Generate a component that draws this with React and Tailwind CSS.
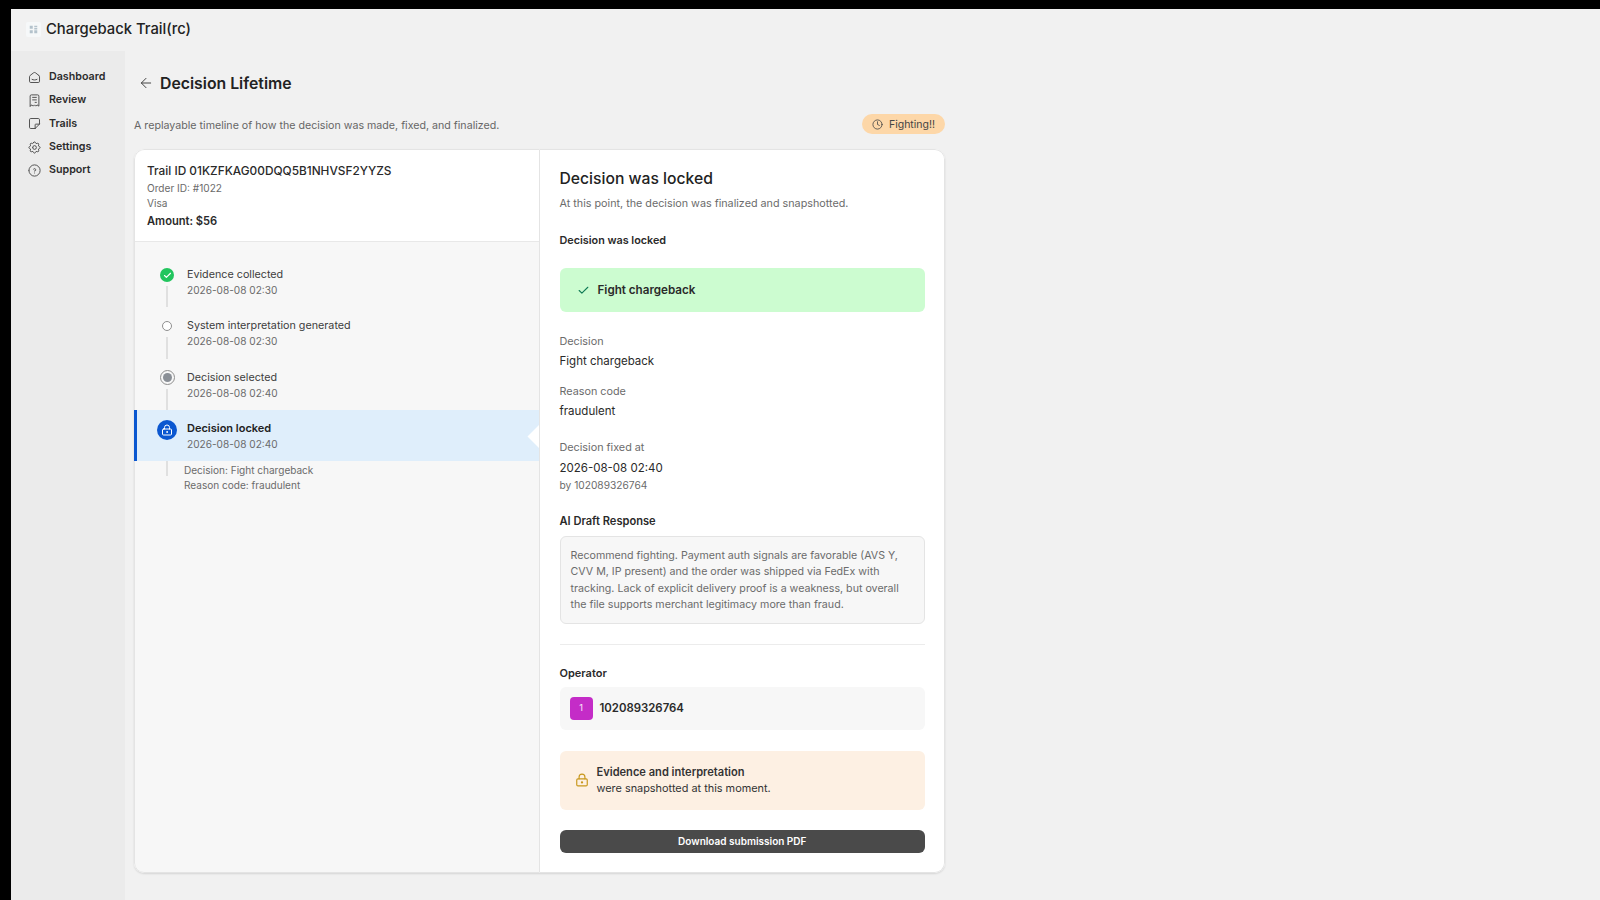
import { ArrowLeft, Check, Clock, LockKeyhole } from 'lucide-react'
import { TbHelpCircle, TbNote, TbReceipt, TbSettings, TbSmartHome } from 'react-icons/tb'

const navItems = [
  { label: 'Dashboard', icon: TbSmartHome },
  { label: 'Review', icon: TbReceipt },
  { label: 'Trails', icon: TbNote },
  { label: 'Settings', icon: TbSettings },
  { label: 'Support', icon: TbHelpCircle },
]

const Line = () => <div className="w-[2px] flex-1 bg-[#e0e0e0] mt-[2px] -mb-[8px]" />

const TimelineRow = ({ title, time, icon, active, last }) => (
  <div className={`relative -ml-px flex h-[51.33px] overflow-hidden ${active ? 'bg-[#dfeefb]' : ''}`}>
    {active && <div className="w-[3px] bg-[#0b57d0]" />}
    <div className={`flex flex-col items-center ${active ? 'w-[20px] ml-[20px]' : 'w-[20px] ml-[23px]'}`}>
      <div className={`flex items-center justify-center shrink-0 ${active ? 'h-[20px] mt-[10px]' : 'h-[18px] mt-[10px]'}`}>{icon}</div>
      {!last && <Line />}
    </div>
    <div className="ml-[10px] pt-[11px]">
      <div className={`text-[10.75px] leading-[15px] ${active ? 'text-[11px] font-semibold text-[#222222]' : 'text-[#3d3d3d]'}`}>{title}</div>
      <div className="text-[10.1px] leading-4 text-[#6b6b6b]">{time}</div>
    </div>
    {active && <div className="absolute right-[-8.5px] top-[18px] w-[17px] h-[17px] rotate-45 bg-white" />}
  </div>
)

const Field = ({ label, value, className, valueClass = 'mt-[3px]' }) => (
  <div className={className}>
    <div className="text-[10.8px] leading-4 text-[#6b6b6b]">{label}</div>
    <div className={`${valueClass} text-[11.5px] leading-4 text-[#2a2a2a]`}>{value}</div>
  </div>
)

export default function App() {
  return (
    <div className="flex h-screen w-full flex-col bg-black pt-[9px] pl-[11px] font-['Inter',sans-serif]">
      <header className="flex h-[42px] shrink-0 items-center bg-[#f1f1f1] pl-[15px] pb-[2px]">
        <div className="flex h-[15px] w-[15px] items-center justify-center rounded-[2px] bg-[#f6f8f9]">
          <svg viewBox="0 0 12 12" className="h-[9px] w-[9px]" fill="#b4c2cc">
            <rect x="1" y="1" width="4" height="4" />
            <rect x="7" y="1" width="4" height="2" />
            <rect x="7" y="4" width="4" height="2" />
            <rect x="1" y="7" width="4" height="4" />
            <rect x="7" y="7" width="4" height="4" />
          </svg>
        </div>
        <h1 className="ml-[5px] text-[14.8px] font-medium text-[#222222]">Chargeback Trail(rc)</h1>
      </header>

      <div className="flex min-h-0 flex-1">
        <aside className="w-[114px] shrink-0 bg-[#ebebeb] pl-[15.5px] pt-[14.5px]">
          {navItems.map(({ label, icon: Icon }) => (
            <div key={label} className="flex h-[23.3px] items-center gap-[7.5px] text-[10.7px] font-semibold text-[#2c2c2c]">
              <Icon className="h-[15px] w-[15px] text-[#4b4b4b]" strokeWidth={1.5} />
              {label}
            </div>
          ))}
        </aside>

        <main className="min-w-0 flex-1 bg-[#f1f1f1] pl-[9px]">
          <div className="mt-[16px] flex h-[32px] items-center pl-[3.5px]">
            <ArrowLeft className="h-[16px] w-[16px] text-[#444444]" strokeWidth={1.5} />
            <h2 className="ml-[6.5px] pt-[1px] text-[15.8px] font-semibold text-[#222222]">Decision Lifetime</h2>
          </div>

          <div className="mt-[15px] flex h-[20px] w-[811px] items-center justify-between">
            <p className="pt-[3px] text-[10.67px] text-[#666666]">A replayable timeline of how the decision was made, fixed, and finalized.</p>
            <span className="flex h-[20px] w-[83px] items-center justify-center gap-[6px] rounded-full bg-[#fdd7a8] pt-[1px] text-[10.5px] text-[#444444]">
              <Clock className="h-[11px] w-[11px]" strokeWidth={1.75} />
              Fighting!!
            </span>
          </div>

          <section className="mt-[15px] flex h-[724px] w-[811px] overflow-hidden rounded-[10px] bg-white shadow-[0_1px_2px_rgba(0,0,0,0.12)]">
            <div className="flex w-[406px] shrink-0 flex-col rounded-l-[10px] border border-[#e4e4e4] bg-[#f7f7f7]">
              <div className="h-[92px] shrink-0 rounded-tl-[10px] border-b border-[#e8e8e8] bg-white pl-[12px] pt-[12px]">
                <div className="text-[11.85px] leading-[18px] font-medium text-[#2a2a2a]">Trail ID 01KZFKAG00DQQ5B1NHVSF2YYZS</div>
                <div className="mt-[1px] text-[10.1px] leading-[15px] text-[#6b6b6b]">Order ID: #1022</div>
                <div className="text-[10.1px] leading-[15px] text-[#6b6b6b]">Visa</div>
                <div className="mt-[2px] text-[11.15px] leading-[17px] font-semibold text-[#2a2a2a]">Amount: $56</div>
              </div>

              <div className="pt-[14px]">
                <TimelineRow
                  title="Evidence collected"
                  time="2026-08-08 02:30"
                  icon={
                    <span className="flex h-[14px] w-[14px] items-center justify-center rounded-full bg-[#22c55e]">
                      <Check className="h-[9px] w-[9px] text-white" strokeWidth={3} />
                    </span>
                  }
                />
                <TimelineRow
                  title="System interpretation generated"
                  time="2026-08-08 02:30"
                  icon={<span className="h-[10px] w-[10px] rounded-full border-[1.5px] border-[#8f8f8f] bg-white" />}
                />
                <TimelineRow
                  title="Decision selected"
                  time="2026-08-08 02:40"
                  icon={
                    <span className="flex h-[15px] w-[15px] items-center justify-center rounded-full border-[1.5px] border-[#8f8f8f]">
                      <span className="h-[9px] w-[9px] rounded-full bg-[#8a8f96]" />
                    </span>
                  }
                />
                <TimelineRow
                  active
                  last
                  title="Decision locked"
                  time="2026-08-08 02:40"
                  icon={
                    <span className="flex h-[20px] w-[20px] items-center justify-center rounded-full bg-[#0b57d0]">
                      <LockKeyhole className="h-[12px] w-[12px] text-white" strokeWidth={2} />
                    </span>
                  }
                />
                <div className="flex">
                  <div className="ml-[31px] h-[15px] w-[2px] bg-[#e0e0e0]" />
                  <div className="ml-[16px] pt-[2px] text-[10.05px] leading-[15px] text-[#6b6b6b]">
                    <div>Decision: Fight chargeback</div>
                    <div>Reason code: fraudulent</div>
                  </div>
                </div>
              </div>
            </div>

            <div className="flex min-w-0 flex-1 flex-col rounded-r-[10px] border-y border-r border-[#e4e4e4] pl-[19.5px] pr-[19px] pt-[17px]">
              <h3 className="text-[15.7px] leading-6 font-medium text-[#222222]">Decision was locked</h3>
              <p className="mt-[5px] text-[10.77px] leading-4 text-[#6b6b6b]">At this point, the decision was finalized and snapshotted.</p>
              <div className="mt-[21px] text-[10.8px] leading-4 font-semibold text-[#2a2a2a]">Decision was locked</div>

              <div className="mt-[19px] flex h-[44px] items-center rounded-[6px] bg-[#ccfcd0] pl-[17px]">
                <Check className="h-[13px] w-[13px] text-[#0f7a55]" strokeWidth={2} />
                <span className="ml-[8px] pt-[2px] text-[11.65px] font-semibold text-[#2a2a2a]">Fight chargeback</span>
              </div>

              <Field label="Decision" value="Fight chargeback" className="mt-[22px]" />
              <Field label="Reason code" value="fraudulent" className="mt-[15px]" />

              <Field label="Decision fixed at" value="2026-08-08 02:40" className="mt-[21px]" valueClass="mt-1" />
              <div className="mt-[1px] text-[10.2px] leading-4 text-[#6b6b6b]">by 102089326764</div>

              <div className="mt-[19.5px] text-[11.1px] leading-4 font-semibold text-[#2a2a2a]">AI Draft Response</div>
              <div className="mt-[7px] h-[88px] rounded-[6px] border border-[#e4e4e4] bg-[#f7f7f7] pl-[10px] pr-[8px] pt-[11px] text-[10.67px] leading-[16.5px] text-[#6b6b6b]">
                Recommend fighting. Payment auth signals are favorable (AVS Y, CVV M, IP present) and the order was shipped via FedEx with tracking. Lack of explicit delivery proof is a weakness, but overall the file supports merchant legitimacy more than fraud.
              </div>

              <div className="mt-[20px] h-px bg-[#ececec]" />

              <div className="mt-[20px] text-[11px] leading-4 font-semibold text-[#2a2a2a]">Operator</div>
              <div className="mt-[6px] flex h-[43px] items-center rounded-[6px] bg-[#f7f7f7] pl-[10px]">
                <span className="flex h-[23px] w-[23px] items-center justify-center rounded-[4px] bg-[#c42cc7] text-[9px] font-medium text-[#f3d5f4]">1</span>
                <span className="ml-[7px] pt-[2px] text-[11.4px] font-semibold text-[#2a2a2a]">102089326764</span>
              </div>

              <div className="mt-[21px] flex h-[59px] items-center rounded-[6px] bg-[#fdf0e3] pl-[15px]">
                <LockKeyhole className="h-[14px] w-[14px] text-[#c8971c]" strokeWidth={2} />
                <div className="ml-[8px] text-[10.9px] leading-[16.5px] text-[#333333]">
                  <div className="text-[11.1px] font-semibold">Evidence and interpretation</div>
                  <div>were snapshotted at this moment.</div>
                </div>
              </div>

              <button className="mt-[20px] h-[23px] w-full rounded-[6px] bg-[#4a4a4a] text-[10px] font-semibold text-white">Download submission PDF</button>
            </div>
          </section>
        </main>
      </div>
    </div>
  )
}
